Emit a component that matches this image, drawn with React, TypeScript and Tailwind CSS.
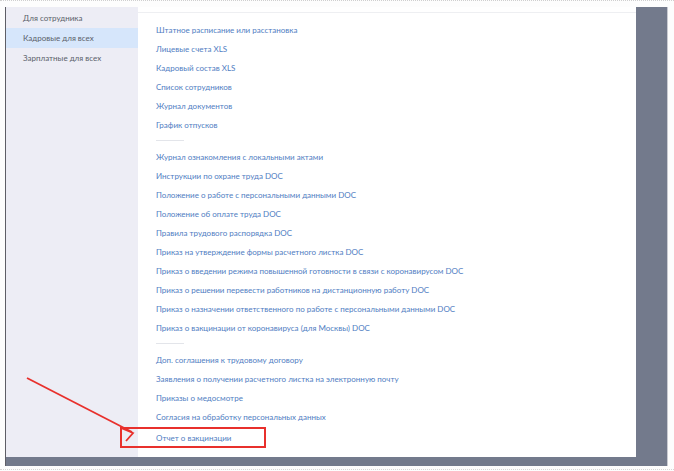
import React from "react";

const group1 = [
  "Штатное расписание или расстановка",
  "Лицевые счета XLS",
  "Кадровый состав XLS",
  "Список сотрудников",
  "Журнал документов",
  "График отпусков",
];
const group2 = [
  "Журнал ознакомления с локальными актами",
  "Инструкции по охране труда DOC",
  "Положение о работе с персональными данными DOC",
  "Положение об оплате труда DOC",
  "Правила трудового распорядка DOC",
  "Приказ на утверждение формы расчетного листка DOC",
  "Приказ о введении режима повышенной готовности в связи с коронавирусом DOC",
  "Приказ о решении перевести работников на дистанционную работу DOC",
  "Приказ о назначении ответственного по работе с персональными данными DOC",
  "Приказ о вакцинации от коронавируса (для Москвы) DOC",
];
const group3 = [
  "Доп. соглашения к трудовому договору",
  "Заявления о получении расчетного листка на электронную почту",
  "Приказы о медосмотре",
  "Согласия на обработку персональных данных",
];

function Link({ text }: { text: string }) {
  return (
    <div className="h-[19px] flex items-center text-[8px] text-[#4f7dc2] whitespace-nowrap">
      {text}
    </div>
  );
}

function Sep() {
  return (
    <div className="h-[13px] flex items-center">
      <div className="w-[28px] h-px bg-[#e3e5ea]" />
    </div>
  );
}

export default function App() {
  return (
    <div
      className="relative w-[674px] h-[471px] bg-[#fdfdfd] overflow-hidden"
      style={{ fontFamily: "Lato, 'Noto Sans', sans-serif" }}
    >
      <div className="h-[2px] border-t border-dotted border-[#cfcfcf]" />
      <div className="pl-[5px] pt-[5px]">
        <div className="w-[663px] h-[459px] bg-[#737a8c] border-l-[1.5px] border-[#5e5e66] border-r border-r-[#c9cbd2] flex flex-col">
          <div className="flex flex-1 pr-[31px]">
            <div className="w-[132px] bg-[#ededf5] pt-[1px] text-[8px] text-[#5a5f6a]">
              <div className="h-[20px] flex items-center pl-[17px]">Для сотрудника</div>
              <div className="h-[20px] flex items-center pl-[17px] bg-[#d6e6fb]">Кадровые для всех</div>
              <div className="h-[20px] flex items-center pl-[17px]">Зарплатные для всех</div>
            </div>
            <div className="flex-1 bg-white pt-[5px]">
              <div className="border-t border-[#eeeff2] pl-[18px] pt-[7px]">
                {group1.map((t) => (
                  <Link key={t} text={t} />
                ))}
                <Sep />
                {group2.map((t) => (
                  <Link key={t} text={t} />
                ))}
                <Sep />
                {group3.map((t) => (
                  <Link key={t} text={t} />
                ))}
                <div className="-ml-[36px] mt-[1px] w-[146px] h-[21px] border-2 border-[#e8302c] flex items-center pl-[34px] text-[8px] text-[#4f7dc2] whitespace-nowrap">
                  Отчет о вакцинации
                </div>
              </div>
            </div>
          </div>
          <div className="h-[9px]" />
        </div>
      </div>
      <div className="absolute left-0 right-0 bottom-[1px] h-px border-t border-dotted border-[#d5d5d5]" />
      <svg className="absolute left-0 top-0" width="674" height="471" viewBox="0 0 674 471">
        <line x1="27" y1="378" x2="132" y2="432" stroke="#e8302c" strokeWidth="1.8" />
        <polyline points="121,428 133,433 126,441" fill="none" stroke="#e8302c" strokeWidth="1.8" />
      </svg>
    </div>
  );
}
